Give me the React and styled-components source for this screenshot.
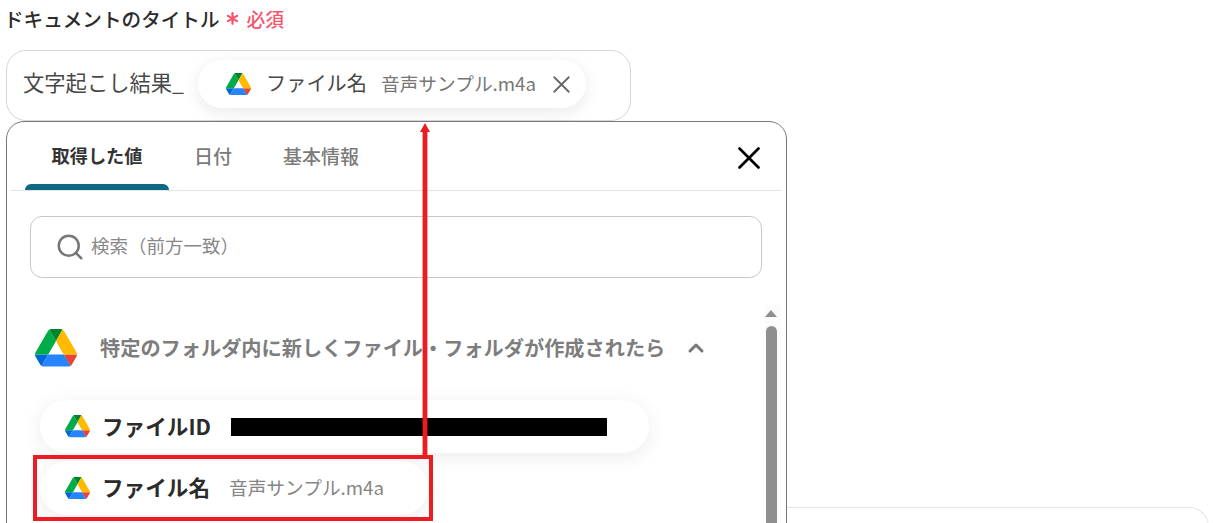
import React from "react";
import styled, { createGlobalStyle } from "styled-components";
import { Search, ChevronUp, X, Asterisk } from "lucide-react";

const Global = createGlobalStyle`
  html, body { margin: 0; padding: 0; background: #fff; }
  body { font-family: "Noto Sans CJK JP", "Noto Sans", sans-serif; }
  * { box-sizing: border-box; }
`;

const Page = styled.div`
  position: relative;
  width: 1213px;
  height: 523px;
  overflow: hidden;
  background: #fff;
  padding: 0 4px 0 6px;
`;

const Label = styled.div`
  display: flex;
  align-items: center;
  height: 36px;
  margin-left: -2px;
  font-size: 19.6px;
  font-weight: 500;
  color: #2b2b2b;
  white-space: nowrap;
`;

const Required = styled.span`
  display: flex;
  align-items: center;
  margin-left: 2px;
  gap: 4px;
  font-size: 18.8px;
  font-weight: 500;
  color: #f4566f;
`;

const InputBox = styled.div`
  display: flex;
  align-items: center;
  width: 625px;
  height: 71px;
  margin-top: 14px;
  padding: 0 0 3px 16px;
  border: 1px solid #d3d7db;
  border-radius: 20px;
  background: #fff;
`;

const InputText = styled.span`
  font-size: 21.3px;
  color: #484848;
  white-space: nowrap;
  width: 175px;
  margin-bottom: 5px;
`;

const Chip = styled.div`
  display: flex;
  align-items: center;
  width: 388px;
  height: 48px;
  padding-left: 28px;
  border-radius: 24px;
  background: #fff;
  box-shadow: 0 4px 18px rgba(0, 0, 0, 0.09);
`;

const ChipName = styled.span`
  margin: 0 0 3px 15px;
  font-size: 20.2px;
  color: #484848;
  white-space: nowrap;
  width: 115px;
`;

const ChipValue = styled.span`
  margin-bottom: 3px;
  font-size: 18.7px;
  color: #777;
  white-space: nowrap;
  width: 166px;
`;

const Lower = styled.div`
  display: flex;
  align-items: flex-start;
`;

const Popup = styled.div`
  flex: none;
  width: 781px;
  height: 440px;
  padding: 0 4px;
  border: 1px solid #777;
  border-radius: 18px;
  background: #fff;
`;

const NextCard = styled.div`
  flex: 1;
  height: 60px;
  margin-top: 386px;
  border-top: 1px solid #e6e6e6;
  border-right: 1px solid #e6e6e6;
  border-top-right-radius: 20px;
`;

const TabBar = styled.div`
  display: flex;
  align-items: stretch;
  height: 69px;
  padding: 0 14px 0 14px;
  border-bottom: 1px solid #e4e4e4;
`;

const Tab = styled.div`
  position: relative;
  display: flex;
  align-items: center;
  justify-content: center;
  width: ${(p) => p.$w}px;
  padding-bottom: 2px;
  font-size: ${(p) => (p.$active ? 18.2 : 19)}px;
  font-weight: ${(p) => (p.$active ? 700 : 500)};
  color: ${(p) => (p.$active ? "#333" : "#7b7b7b")};
  &::after {
    content: "";
    display: ${(p) => (p.$active ? "block" : "none")};
    position: absolute;
    left: 0;
    right: 0;
    bottom: 0;
    height: 6px;
    border-radius: 6px 6px 0 0;
    background: #0b6a82;
  }
`;

const TabSpacer = styled.div`
  flex: 1;
`;

const CloseButton = styled.div`
  display: flex;
  align-items: center;
  color: #000;
  padding-top: 4px;
`;

const Body = styled.div`
  display: flex;
  flex-direction: column;
`;

const SearchBox = styled.div`
  display: flex;
  align-items: center;
  gap: 6px;
  height: 62px;
  margin: 25px 20px 0 19px;
  padding: 0 0 0 24px;
  border: 1px solid #c8c8c8;
  border-radius: 12px;
`;

const SearchText = styled.span`
  margin-bottom: 3px;
  font-size: 18.5px;
  line-height: 1;
  color: #888;
`;

const Scroller = styled.div`
  display: flex;
  margin-top: 27px;
`;

const List = styled.div`
  flex: 1;
  padding-left: 23px;
`;

const SectionHead = styled.div`
  display: flex;
  align-items: center;
  height: 42px;
  margin-top: 22px;
  font-size: 20.2px;
  font-weight: 700;
  color: #7d7d7d;
  white-space: nowrap;
`;

const SectionIcon = styled.span`
  display: flex;
  margin-left: 1px;
`;

const SectionText = styled.span`
  margin: 0 0 2px 23px;
`;

const Chevron = styled.span`
  display: flex;
  margin-left: 19px;
  color: #777;
`;

const Pill = styled.div`
  display: flex;
  align-items: center;
  width: ${(p) => p.$w}px;
  height: ${(p) => p.$h}px;
  margin: ${(p) => p.$mt}px 0 0 6px;
  padding-left: 25px;
  border-radius: 27px;
  background: #fff;
  box-shadow: 0 4px 20px rgba(0, 0, 0, 0.08);
`;

const PillName = styled.span`
  margin: 0 0 3px 12px;
  font-size: 21.6px;
  font-weight: 700;
  color: #2b2b2b;
  white-space: nowrap;
  width: 127px;
`;

const PillValue = styled.span`
  margin-bottom: 3px;
  font-size: 18.7px;
  color: #858585;
  white-space: nowrap;
`;

const Redaction = styled.span`
  width: 376px;
  height: 18px;
  background: #000;
  margin-left: 2px;
`;

const Track = styled.div`
  flex: none;
  position: relative;
  width: 16px;
  height: 240px;
  margin-right: 1px;
  background: #fbfbfb;
`;

const TrackArrow = styled.div`
  position: absolute;
  top: 5px;
  left: 0;
  width: 0;
  height: 0;
  border-left: 6px solid transparent;
  border-right: 6px solid transparent;
  border-bottom: 7px solid #8f8f8f;
`;

const Thumb = styled.div`
  position: absolute;
  top: 21px;
  left: 1px;
  width: 11px;
  height: 240px;
  border-radius: 6px;
  background: #8f8f8f;
`;

const RedBox = styled.div`
  position: absolute;
  left: 33px;
  top: 455px;
  width: 400px;
  height: 66px;
  border: 4px solid #ec1c24;
`;

const ArrowSvg = styled.svg`
  position: absolute;
  left: 418px;
  top: 121px;
`;

const Drive = ({ size }) => (
  <svg width={size} height={(size * 78) / 87.3} viewBox="0 0 87.3 78" style={{ flex: "none" }}>
    <path d="m6.6 66.85 3.85 6.65c.8 1.4 1.95 2.5 3.3 3.3l13.75-23.8h-27.5c0 1.55.4 3.1 1.2 4.5z" fill="#0066da" />
    <path d="m43.65 25-13.75-23.8c-1.35.8-2.5 1.9-3.3 3.3l-25.4 44a9.06 9.06 0 0 0 -1.2 4.5h27.5z" fill="#00ac47" />
    <path d="m73.55 76.8c1.35-.8 2.5-1.9 3.3-3.3l1.6-2.75 7.65-13.25c.8-1.4 1.2-2.95 1.2-4.5h-27.502l5.852 11.5z" fill="#ea4335" />
    <path d="m43.65 25 13.75-23.8c-1.35-.8-2.9-1.2-4.5-1.2h-18.5c-1.6 0-3.15.45-4.5 1.2z" fill="#00832d" />
    <path d="m59.8 53h-32.3l-13.75 23.8c1.35.8 2.9 1.2 4.5 1.2h50.8c1.6 0 3.15-.45 4.5-1.2z" fill="#2684fc" />
    <path d="m73.4 26.5-12.7-22c-.8-1.4-1.95-2.5-3.3-3.3l-13.75 23.8 16.15 28h27.45c0-1.55-.4-3.1-1.2-4.5z" fill="#ffba00" />
  </svg>
);

export default function App() {
  return (
    <Page>
      <Global />
      <Label>
        ドキュメントのタイトル
        <Required>
          <Asterisk size={21} strokeWidth={2.6} />
          必須
        </Required>
      </Label>
      <InputBox>
        <InputText>文字起こし結果_</InputText>
        <Chip>
          <Drive size={25} />
          <ChipName>ファイル名</ChipName>
          <ChipValue>音声サンプル.m4a</ChipValue>
          <X size={29} strokeWidth={1.5} color="#666" />
        </Chip>
      </InputBox>
      <Lower>
        <Popup>
          <TabBar>
            <Tab $active $w={144}>取得した値</Tab>
            <Tab $w={88}>日付</Tab>
            <Tab $w={128}>基本情報</Tab>
            <TabSpacer />
            <CloseButton>
              <X size={38} strokeWidth={1.7} />
            </CloseButton>
          </TabBar>
          <Body>
            <SearchBox>
              <Search size={30} strokeWidth={2} color="#777" />
              <SearchText>検索（前方一致）</SearchText>
            </SearchBox>
            <Scroller>
              <List>
                <SectionHead>
                  <SectionIcon>
                    <Drive size={42} />
                  </SectionIcon>
                  <SectionText>特定のフォルダ内に新しくファイル・フォルダが作成されたら</SectionText>
                  <Chevron>
                    <ChevronUp size={24} strokeWidth={3} />
                  </Chevron>
                </SectionHead>
                <Pill $w={609} $h={53} $mt={31}>
                  <Drive size={25} />
                  <PillName>ファイルID</PillName>
                  <Redaction />
                </Pill>
                <Pill $w={388} $h={54} $mt={8}>
                  <Drive size={25} />
                  <PillName>ファイル名</PillName>
                  <PillValue>音声サンプル.m4a</PillValue>
                </Pill>
              </List>
              <Track>
                <TrackArrow />
                <Thumb />
              </Track>
            </Scroller>
          </Body>
        </Popup>
        <NextCard />
      </Lower>
      <RedBox />
      <ArrowSvg width="14" height="336" viewBox="0 0 14 336">
        <path d="M7 2 L12 11 H9.4 V336 H4.6 V11 H2 Z" fill="#ec1c24" />
      </ArrowSvg>
    </Page>
  );
}
